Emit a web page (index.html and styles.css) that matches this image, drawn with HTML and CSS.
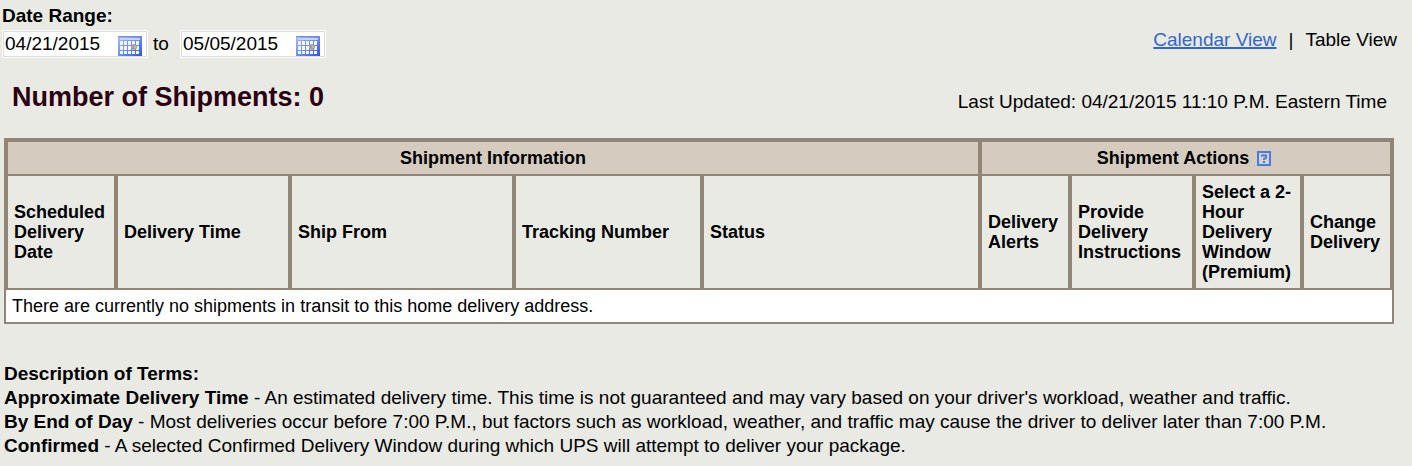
FILE: index.html
```html
<!DOCTYPE html>
<html lang="en">
<head>
    <meta charset="UTF-8">
    <meta name="viewport" content="width=device-width, initial-scale=1.0">
    <title>Shipments</title>

    <link rel="stylesheet" href="styles.css">
</head>

<body>

    <!-- Calendar icon shared by both date fields -->
    <svg class="sprite" width="0" height="0" aria-hidden="true">
        <defs>
            <linearGradient id="calendarFill" x1="0" y1="0" x2="1" y2="1">
                <stop offset="0" stop-color="#a9bcfb" />
                <stop offset="0.5" stop-color="#6e8df3" />
                <stop offset="1" stop-color="#2f55dc" />
            </linearGradient>
        </defs>
        <symbol id="calendar" viewBox="0 0 24 20">
            <rect width="24" height="20" fill="url(#calendarFill)" />
            <rect width="24" height="1" fill="#6e8ce8" />
            <rect x="2" y="2" width="20" height="2" fill="#c6d3ff" />
            <path fill="#f4f6ff" d="M2 5h3v4h-3z M6 5h3v4h-3z M10 5h3v4h-3z M14 5h3v4h-3z M18 5h3v4h-3z M2 10h3v4h-3z M6 10h3v4h-3z M10 10h3v4h-3z M14 10h3v4h-3z M18 10h3v4h-3z M2 15h3v3h-3z M6 15h3v3h-3z M10 15h3v3h-3z M14 15h3v3h-3z M18 15h3v3h-3z" />
            <circle cx="16" cy="11" r="3" fill="#a5a39f" />
            <circle cx="17" cy="11" r="1" fill="#c9c1ae" />
        </symbol>
    </svg>

    <!-- Date Range & View Links -->
    <div class="toolbar">
        <div class="date-range">
            <div class="date-title">Date Range:</div>
            <div class="date-fields">
                <div class="date-field">
                    <input type="text" id="fromDate" value="04/21/2015" aria-label="From date">
                    <button type="button" aria-label="Choose from date"><svg width="24" height="20"><use href="#calendar" /></svg></button>
                </div>
                <span class="date-to">to</span>
                <div class="date-field">
                    <input type="text" id="toDate" value="05/05/2015" aria-label="To date">
                    <button type="button" aria-label="Choose to date"><svg width="24" height="20"><use href="#calendar" /></svg></button>
                </div>
            </div>
        </div>
        <div class="views">
            <a href="#calendar-view">Calendar View</a>
            <span>|</span>
            <span>Table View</span>
        </div>
    </div>

    <!-- Heading -->
    <div class="summary">
        <h1>Number of Shipments: 0</h1>
        <p>Last Updated: 04/21/2015 11:10 P.M. Eastern Time</p>
    </div>

    <!-- Shipments Table -->
    <table class="shipments">
        <colgroup>
            <col class="col-date">
            <col class="col-time">
            <col class="col-from">
            <col class="col-tracking">
            <col class="col-status">
            <col class="col-alerts">
            <col class="col-instructions">
            <col class="col-window">
            <col class="col-change">
        </colgroup>
        <thead>
            <tr class="groups">
                <th colspan="5">Shipment Information</th>
                <th colspan="4">
                    Shipment Actions
                    <a class="help" href="#help" aria-label="Help">
                        <svg width="14" height="15" viewBox="0 0 14 15">
                            <rect x="1" y="1" width="12" height="13" fill="#d3d2cf" stroke="#4a7be0" stroke-width="2" />
                            <path d="M5 5.5V4.5H9V7L7 8V9" fill="none" stroke="#4a7be0" stroke-width="2" />
                            <rect x="6" y="10" width="2" height="2" fill="#4a7be0" />
                        </svg>
                    </a>
                </th>
            </tr>
            <tr class="columns">
                <th>Scheduled Delivery Date</th>
                <th>Delivery Time</th>
                <th>Ship From</th>
                <th>Tracking Number</th>
                <th>Status</th>
                <th>Delivery Alerts</th>
                <th>Provide Delivery Instructions</th>
                <th>Select a 2-Hour Delivery Window (Premium)</th>
                <th>Change Delivery</th>
            </tr>
        </thead>
        <tbody>
            <tr>
                <td colspan="9">There are currently no shipments in transit to this home delivery address.</td>
            </tr>
        </tbody>
    </table>

    <!-- Description of Terms -->
    <div class="terms">
        <h2>Description of Terms:</h2>
        <p><b>Approximate Delivery Time</b> - An estimated delivery time. This time is not guaranteed and may vary based on your driver's workload, weather and traffic.</p>
        <p><b>By End of Day</b> - Most deliveries occur before 7:00 P.M., but factors such as workload, weather, and traffic may cause the driver to deliver later than 7:00 P.M.</p>
        <p><b>Confirmed</b> - A selected Confirmed Delivery Window during which UPS will attempt to deliver your package.</p>
    </div>

</body>
</html>
```
FILE: styles.css
```css
/* ===== General Styling ===== */
* {
    box-sizing: border-box;
}

body {
    margin: 0;
    padding: 4px 0 8px;
    font-family: "Liberation Sans", Arial, sans-serif;
    font-size: 19px;
    line-height: 24px;
    color: #000;
    background: #e9eae4;
}

h1, h2, p {
    margin: 0;
}

.sprite {
    display: block;
}

/* ===== Date Range ===== */
.toolbar {
    display: flex;
    justify-content: space-between;
    align-items: flex-end;
    padding: 0 15px 0 2px;
}

.date-title {
    font-weight: bold;
}

.date-fields {
    display: flex;
    align-items: center;
    margin-top: 2px;
}

.date-field {
    display: flex;
    align-items: center;
    width: 146px;
    height: 28px;
    padding: 0 5px 0 2px;
    background: #fff;
    border: 1px solid #fff;
    outline: 1px solid #dcdcda;
    outline-offset: -2px;
}

.date-field input {
    flex: 1;
    min-width: 0;
    height: 24px;
    padding: 0;
    border: none;
    background: transparent;
    font: inherit;
    color: #000;
}

.date-field button {
    display: flex;
    padding: 4px 0 0;
    border: none;
    background: none;
    cursor: pointer;
}

.date-to {
    width: 32px;
    padding-left: 5px;
}

.views {
    display: flex;
    gap: 12px;
    padding-bottom: 6px;
}

.views a {
    color: #3366cc;
    text-decoration-thickness: 2px;
}

/* ===== Heading ===== */
.summary {
    display: flex;
    justify-content: space-between;
    align-items: flex-end;
    padding: 22px 25px 24px 12px;
}

.summary h1 {
    font-size: 27px;
    line-height: 34px;
    color: #2b0010;
}

/* ===== Shipments Table ===== */
.shipments {
    width: calc(100% - 22px);
    margin-left: 4px;
    table-layout: fixed;
    border: 2px solid #918575;
    border-collapse: separate;
    border-spacing: 0;
    font-size: 18px;
    line-height: 20px;
}

.shipments th {
    padding: 6px;
    border: 2px solid #918575;
    border-top: none;
    text-align: left;
}

.shipments .groups th {
    border-top: 2px solid #918575;
    background: #d5ccbf;
    text-align: center;
}

.shipments td {
    padding: 6px;
    background: #fff;
}

.col-date {
    width: 110px;
}

.col-time {
    width: 174px;
}

.col-from {
    width: 224px;
}

.col-tracking {
    width: 188px;
}

.col-alerts,
.col-change {
    width: 90px;
}

.col-instructions {
    width: 124px;
}

.col-window {
    width: 108px;
}

.help svg {
    margin: 0 4px 0 3px;
    vertical-align: -2px;
}

/* ===== Description of Terms ===== */
.terms {
    padding: 38px 4px 0;
}

.terms h2 {
    font-size: inherit;
}
```
